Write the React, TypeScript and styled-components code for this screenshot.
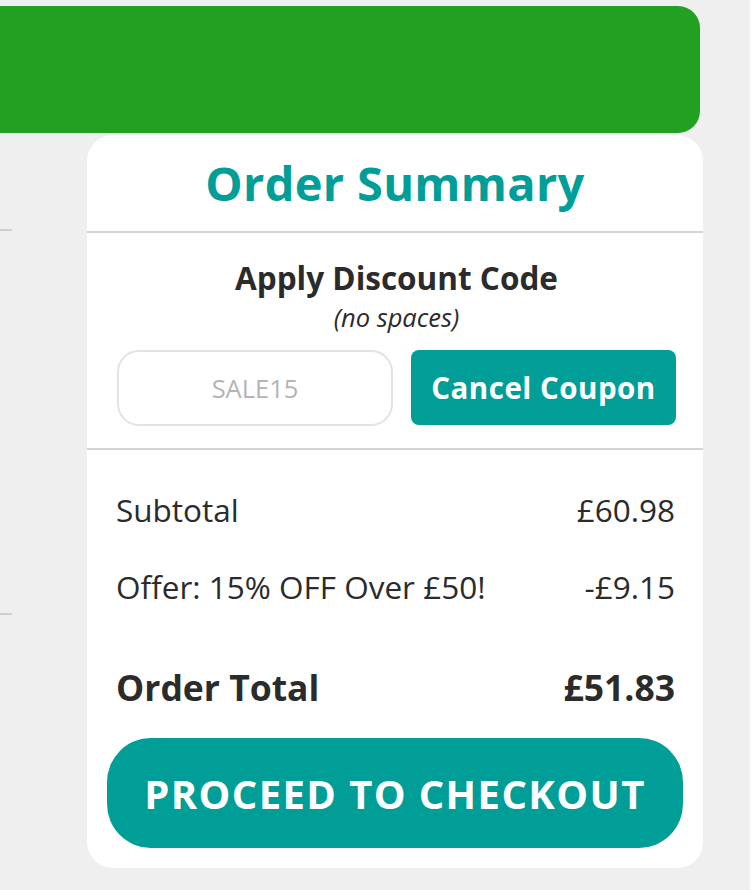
import React from "react";
import styled, { createGlobalStyle } from "styled-components";

const GlobalStyle = createGlobalStyle`
  html, body {
    margin: 0;
    padding: 0;
    background: #ffffff;
  }
  body {
    font-family: "Open Sans", "Noto Sans", Arial, sans-serif;
    color: #2b2b2b;
  }
  * { box-sizing: border-box; }
`;

const Page = styled.div`
  width: 750px;
  height: 890px;
  background: #efefef;
  padding-top: 6px;
  overflow: hidden;
`;

const Banner = styled.div`
  width: 700px;
  height: 127px;
  background: #22a022;
  border-radius: 0 22px 22px 0;
`;

const Content = styled.div`
  display: flex;
  align-items: flex-start;
  gap: 75px;
  margin-top: 2px;
`;

const SideColumn = styled.div`
  width: 12px;
  display: flex;
  flex-direction: column;
`;

const SideRule = styled.div<{ $offset: number }>`
  height: 2px;
  background: #cfcfcf;
  margin-top: ${(p) => p.$offset}px;
`;

const Card = styled.section`
  width: 616px;
  background: #ffffff;
  border-radius: 26px;
  padding-bottom: 20px;
`;

const Header = styled.header`
  height: 96px;
  display: flex;
  align-items: center;
  justify-content: center;
`;

const Title = styled.h1`
  margin: 0;
  font-size: 47px;
  font-weight: 700;
  color: #009e97;
  letter-spacing: 0.3px;
`;

const Divider = styled.hr`
  margin: 0;
  border: 0;
  height: 2px;
  background: #d4d4d4;
`;

const Discount = styled.div`
  padding: 23px 27px 22px 30px;
  display: flex;
  flex-direction: column;
  align-items: center;
`;

const DiscountTitle = styled.h2`
  margin: 0;
  font-size: 31.5px;
  font-weight: 700;
  line-height: 44px;
  color: #2b2b2b;
`;

const DiscountHint = styled.p`
  margin: 0;
  font-size: 25.5px;
  font-style: italic;
  line-height: 34px;
  color: #2b2b2b;
`;

const CouponRow = styled.div`
  align-self: stretch;
  display: flex;
  gap: 18px;
  margin-top: 16px;
`;

const CouponInput = styled.input`
  width: 276px;
  height: 76px;
  border: 2px solid #e2e2e2;
  border-radius: 22px;
  background: #fff;
  text-align: center;
  font-family: "Open Sans", Arial, sans-serif;
  font-size: 25.5px;
  color: #2b2b2b;
  outline: none;
  &::placeholder {
    color: #b4b4b4;
  }
`;

const CouponButton = styled.button`
  flex: 1;
  height: 75px;
  border: 0;
  border-radius: 8px;
  background: #009e97;
  color: #ffffff;
  font-family: "Open Sans", Arial, sans-serif;
  font-size: 29.5px;
  font-weight: 700;
  letter-spacing: 0.5px;
  cursor: pointer;
`;

const Totals = styled.div`
  padding: 38px 28px 0 29px;
  display: flex;
  flex-direction: column;
`;

const Row = styled.div<{ $strong?: boolean; $gap: number }>`
  display: flex;
  justify-content: space-between;
  align-items: center;
  margin-top: ${(p) => p.$gap}px;
  font-size: ${(p) => (p.$strong ? 35.5 : 31.5)}px;
  font-weight: ${(p) => (p.$strong ? 700 : 400)};
  line-height: 44px;
  color: #2b2b2b;
`;

const CheckoutWrap = styled.div`
  padding: 29px 20px 0 20px;
`;

const CheckoutButton = styled.button`
  width: 100%;
  height: 110px;
  border: 0;
  border-radius: 44px;
  background: #009e97;
  color: #ffffff;
  font-family: "Open Sans", Arial, sans-serif;
  font-size: 40px;
  font-weight: 700;
  letter-spacing: 1.4px;
  cursor: pointer;
`;

export default function App() {
  return (
    <>
      <GlobalStyle />
      <Page>
        <Banner />
        <Content>
          <SideColumn>
            <SideRule $offset={94} />
            <SideRule $offset={382} />
          </SideColumn>
          <Card>
            <Header>
              <Title>Order Summary</Title>
            </Header>
            <Divider />
            <Discount>
              <DiscountTitle>Apply Discount Code</DiscountTitle>
              <DiscountHint>(no spaces)</DiscountHint>
              <CouponRow>
                <CouponInput placeholder="SALE15" />
                <CouponButton>Cancel Coupon</CouponButton>
              </CouponRow>
            </Discount>
            <Divider />
            <Totals>
              <Row $gap={0}>
                <span>Subtotal</span>
                <span>£60.98</span>
              </Row>
              <Row $gap={33}>
                <span>Offer: 15% OFF Over £50!</span>
                <span>-£9.15</span>
              </Row>
              <Row $strong $gap={56}>
                <span>Order Total</span>
                <span>£51.83</span>
              </Row>
            </Totals>
            <CheckoutWrap>
              <CheckoutButton>PROCEED TO CHECKOUT</CheckoutButton>
            </CheckoutWrap>
          </Card>
        </Content>
      </Page>
    </>
  );
}
